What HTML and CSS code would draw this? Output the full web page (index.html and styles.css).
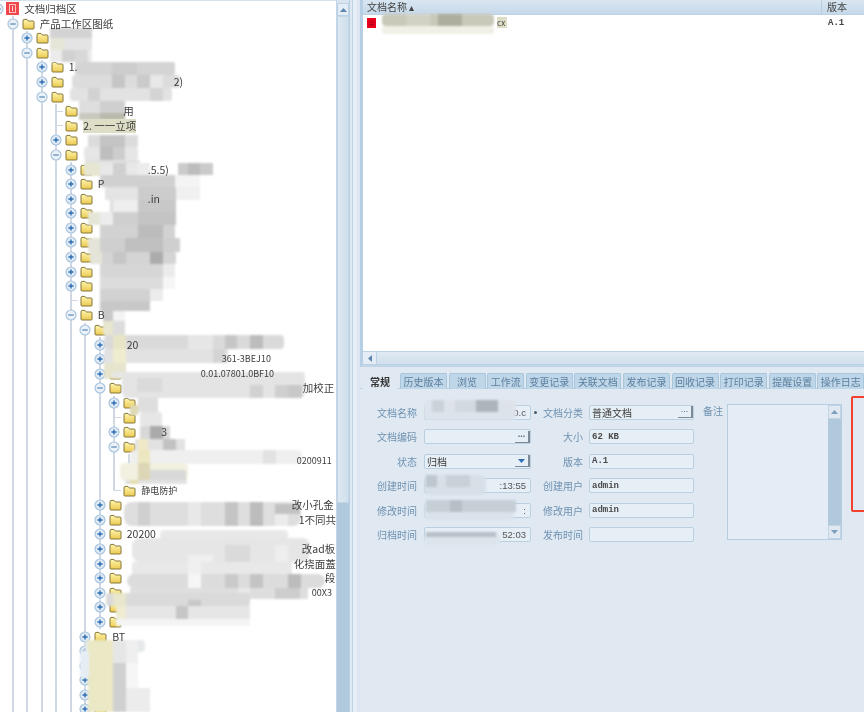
FILE: index.html
```html
<!DOCTYPE html>
<html lang="zh-CN">
<head>
<meta charset="utf-8">
<title>文档归档区</title>
<link rel="stylesheet" href="styles.css">
</head>
<body>
<svg class="defs" aria-hidden="true">
  <defs>
    <linearGradient id="fg" x1="0" y1="0" x2="0" y2="1"><stop offset="0" stop-color="#fff6b0"/><stop offset="1" stop-color="#ecc94e"/></linearGradient>
    <symbol id="folder" viewBox="0 0 13 12"><path d="M1 3.2 L1 10.2 Q1 11 2 11 L11.2 11 Q12 11 12 10.2 L12 4 Q12 3 11 3 L6.4 3 L5 1.4 L2 1.4 Q1 1.4 1 3.2 Z" fill="url(#fg)" stroke="#85773a" stroke-width="1"/></symbol>
    <symbol id="plus" viewBox="0 0 12 12"><circle cx="6" cy="6" r="5" fill="#dfeaf5" stroke="#a9c5de" stroke-width="1.2"/><path d="M3.4 6 H8.6 M6 3.4 V8.6" stroke="#2f6fb2" stroke-width="1.4"/></symbol>
    <symbol id="minus" viewBox="0 0 12 12"><circle cx="6" cy="6" r="5" fill="#eaf1f8" stroke="#a9c5de" stroke-width="1.2"/><path d="M3.2 6 H8.8" stroke="#6d97bd" stroke-width="1.4"/></symbol>
  </defs>
</svg>
<div class="app">
  <section class="left">
    <div class="tree">
      <div class="row"><i class="ex"><svg class="ico"><use href="#minus"/></svg></i><svg class="root-ico" viewBox="0 0 13 13"><rect width="13" height="13" fill="#f0484c"/><rect x="3.5" y="2.5" width="6" height="8" fill="none" stroke="#ffc0c0"/><path d="M6.5 4 V9" stroke="#ffd8d8"/></svg><span class="t">文档归档区</span></div>
      <div class="row"><i class="b"></i><i class="ex"><svg class="ico"><use href="#minus"/></svg></i><svg class="fo"><use href="#folder"/></svg><span class="t">产品工作区图纸</span></div>
      <div class="row"><i class="b"></i><i class="g"></i><i class="ex"><svg class="ico"><use href="#plus"/></svg></i><svg class="fo"><use href="#folder"/></svg></div>
      <div class="row"><i class="b"></i><i class="g"></i><i class="ex"><svg class="ico"><use href="#minus"/></svg></i><svg class="fo"><use href="#folder"/></svg></div>
      <div class="row"><i class="b"></i><i class="g"></i><i class="g"></i><i class="ex"><svg class="ico"><use href="#plus"/></svg></i><svg class="fo"><use href="#folder"/></svg><span class="t">1.</span></div>
      <div class="row"><i class="b"></i><i class="g"></i><i class="g"></i><i class="ex"><svg class="ico"><use href="#plus"/></svg></i><svg class="fo"><use href="#folder"/></svg><span class="t s110">2)</span></div>
      <div class="row"><i class="b"></i><i class="g"></i><i class="g"></i><i class="ex"><svg class="ico"><use href="#minus"/></svg></i><svg class="fo"><use href="#folder"/></svg></div>
      <div class="row"><i class="b"></i><i class="g"></i><i class="g"></i><i class="g"></i><i class="el"></i><svg class="fo"><use href="#folder"/></svg><span class="t s45">用</span></div>
      <div class="row"><i class="b"></i><i class="g"></i><i class="g"></i><i class="g"></i><i class="el"></i><svg class="fo"><use href="#folder"/></svg><span class="t hi">2. 一一立项</span></div>
      <div class="row"><i class="b"></i><i class="g"></i><i class="g"></i><i class="g"></i><i class="ex"><svg class="ico"><use href="#plus"/></svg></i><svg class="fo"><use href="#folder"/></svg></div>
      <div class="row"><i class="b"></i><i class="g"></i><i class="g"></i><i class="g"></i><i class="ex"><svg class="ico"><use href="#minus"/></svg></i><svg class="fo"><use href="#folder"/></svg></div>
      <div class="row"><i class="b"></i><i class="g"></i><i class="g"></i><i class="g"></i><i class="g"></i><i class="ex"><svg class="ico"><use href="#plus"/></svg></i><svg class="fo"><use href="#folder"/></svg><span class="t s55">.5.5)</span></div>
      <div class="row"><i class="b"></i><i class="g"></i><i class="g"></i><i class="g"></i><i class="g"></i><i class="ex"><svg class="ico"><use href="#plus"/></svg></i><svg class="fo"><use href="#folder"/></svg><span class="t">P</span></div>
      <div class="row"><i class="b"></i><i class="g"></i><i class="g"></i><i class="g"></i><i class="g"></i><i class="ex"><svg class="ico"><use href="#plus"/></svg></i><svg class="fo"><use href="#folder"/></svg><span class="t s55">.in</span></div>
      <div class="row"><i class="b"></i><i class="g"></i><i class="g"></i><i class="g"></i><i class="g"></i><i class="ex"><svg class="ico"><use href="#plus"/></svg></i><svg class="fo"><use href="#folder"/></svg></div>
      <div class="row"><i class="b"></i><i class="g"></i><i class="g"></i><i class="g"></i><i class="g"></i><i class="ex"><svg class="ico"><use href="#plus"/></svg></i><svg class="fo"><use href="#folder"/></svg></div>
      <div class="row"><i class="b"></i><i class="g"></i><i class="g"></i><i class="g"></i><i class="g"></i><i class="ex"><svg class="ico"><use href="#plus"/></svg></i><svg class="fo"><use href="#folder"/></svg></div>
      <div class="row"><i class="b"></i><i class="g"></i><i class="g"></i><i class="g"></i><i class="g"></i><i class="ex"><svg class="ico"><use href="#plus"/></svg></i><svg class="fo"><use href="#folder"/></svg></div>
      <div class="row"><i class="b"></i><i class="g"></i><i class="g"></i><i class="g"></i><i class="g"></i><i class="ex"><svg class="ico"><use href="#plus"/></svg></i><svg class="fo"><use href="#folder"/></svg></div>
      <div class="row"><i class="b"></i><i class="g"></i><i class="g"></i><i class="g"></i><i class="g"></i><i class="ex"><svg class="ico"><use href="#plus"/></svg></i><svg class="fo"><use href="#folder"/></svg></div>
      <div class="row"><i class="b"></i><i class="g"></i><i class="g"></i><i class="g"></i><i class="g"></i><i class="el"></i><svg class="fo"><use href="#folder"/></svg></div>
      <div class="row"><i class="b"></i><i class="g"></i><i class="g"></i><i class="g"></i><i class="g"></i><i class="ex"><svg class="ico"><use href="#minus"/></svg></i><svg class="fo"><use href="#folder"/></svg><span class="t">B</span></div>
      <div class="row"><i class="b"></i><i class="g"></i><i class="g"></i><i class="g"></i><i class="g"></i><i class="g"></i><i class="ex"><svg class="ico"><use href="#minus"/></svg></i><svg class="fo"><use href="#folder"/></svg></div>
      <div class="row"><i class="b"></i><i class="g"></i><i class="g"></i><i class="g"></i><i class="g"></i><i class="g"></i><i class="g"></i><i class="ex"><svg class="ico"><use href="#plus"/></svg></i><svg class="fo"><use href="#folder"/></svg><span class="t">20</span></div>
      <div class="row"><i class="b"></i><i class="g"></i><i class="g"></i><i class="g"></i><i class="g"></i><i class="g"></i><i class="g"></i><i class="ex"><svg class="ico"><use href="#plus"/></svg></i><svg class="fo"><use href="#folder"/></svg><span class="t s100 sm">361-3BEJ10</span></div>
      <div class="row"><i class="b"></i><i class="g"></i><i class="g"></i><i class="g"></i><i class="g"></i><i class="g"></i><i class="g"></i><i class="ex"><svg class="ico"><use href="#plus"/></svg></i><svg class="fo"><use href="#folder"/></svg><span class="t s79 sm">0.01.07801.0BF10</span></div>
      <div class="row"><i class="b"></i><i class="g"></i><i class="g"></i><i class="g"></i><i class="g"></i><i class="g"></i><i class="g"></i><i class="ex"><svg class="ico"><use href="#minus"/></svg></i><svg class="fo"><use href="#folder"/></svg><span class="t s181">加校正</span></div>
      <div class="row"><i class="b"></i><i class="g"></i><i class="g"></i><i class="g"></i><i class="g"></i><i class="g"></i><i class="g"></i><i class="g"></i><i class="ex"><svg class="ico"><use href="#plus"/></svg></i><svg class="fo"><use href="#folder"/></svg></div>
      <div class="row"><i class="b"></i><i class="g"></i><i class="g"></i><i class="g"></i><i class="g"></i><i class="g"></i><i class="g"></i><i class="g"></i><i class="el"></i><svg class="fo"><use href="#folder"/></svg></div>
      <div class="row"><i class="b"></i><i class="g"></i><i class="g"></i><i class="g"></i><i class="g"></i><i class="g"></i><i class="g"></i><i class="g"></i><i class="ex"><svg class="ico"><use href="#plus"/></svg></i><svg class="fo"><use href="#folder"/></svg><span class="t s25">3</span></div>
      <div class="row"><i class="b"></i><i class="g"></i><i class="g"></i><i class="g"></i><i class="g"></i><i class="g"></i><i class="g"></i><i class="g"></i><i class="ex"><svg class="ico"><use href="#minus"/></svg></i><svg class="fo"><use href="#folder"/></svg></div>
      <div class="row"><i class="b"></i><i class="g"></i><i class="g"></i><i class="g"></i><i class="g"></i><i class="g"></i><i class="g"></i><i class="g"></i><i class="g"></i><i class="el"></i><svg class="fo"><use href="#folder"/></svg><span class="t s148 sm">0200911</span></div>
      <div class="row"><i class="b"></i><i class="g"></i><i class="g"></i><i class="g"></i><i class="g"></i><i class="g"></i><i class="g"></i><i class="g"></i><i class="g"></i><i class="el"></i><svg class="fo"><use href="#folder"/></svg></div>
      <div class="row"><i class="b"></i><i class="g"></i><i class="g"></i><i class="g"></i><i class="g"></i><i class="g"></i><i class="g"></i><i class="g"></i><i class="el end"></i><svg class="fo"><use href="#folder"/></svg><span class="t sm">静电防护</span></div>
      <div class="row"><i class="b"></i><i class="g"></i><i class="g"></i><i class="g"></i><i class="g"></i><i class="g"></i><i class="g"></i><i class="ex"><svg class="ico"><use href="#plus"/></svg></i><svg class="fo"><use href="#folder"/></svg><span class="t s170">改小孔金</span></div>
      <div class="row"><i class="b"></i><i class="g"></i><i class="g"></i><i class="g"></i><i class="g"></i><i class="g"></i><i class="g"></i><i class="ex"><svg class="ico"><use href="#plus"/></svg></i><svg class="fo"><use href="#folder"/></svg><span class="t s177">1不同共</span></div>
      <div class="row"><i class="b"></i><i class="g"></i><i class="g"></i><i class="g"></i><i class="g"></i><i class="g"></i><i class="g"></i><i class="ex"><svg class="ico"><use href="#plus"/></svg></i><svg class="fo"><use href="#folder"/></svg><span class="t">20200</span></div>
      <div class="row"><i class="b"></i><i class="g"></i><i class="g"></i><i class="g"></i><i class="g"></i><i class="g"></i><i class="g"></i><i class="ex"><svg class="ico"><use href="#plus"/></svg></i><svg class="fo"><use href="#folder"/></svg><span class="t s180">改ad板</span></div>
      <div class="row"><i class="b"></i><i class="g"></i><i class="g"></i><i class="g"></i><i class="g"></i><i class="g"></i><i class="g"></i><i class="ex"><svg class="ico"><use href="#plus"/></svg></i><svg class="fo"><use href="#folder"/></svg><span class="t s172">化挠面蓋</span></div>
      <div class="row"><i class="b"></i><i class="g"></i><i class="g"></i><i class="g"></i><i class="g"></i><i class="g"></i><i class="g"></i><i class="ex"><svg class="ico"><use href="#plus"/></svg></i><svg class="fo"><use href="#folder"/></svg><span class="t s203">段</span></div>
      <div class="row"><i class="b"></i><i class="g"></i><i class="g"></i><i class="g"></i><i class="g"></i><i class="g"></i><i class="g"></i><i class="ex"><svg class="ico"><use href="#plus"/></svg></i><svg class="fo"><use href="#folder"/></svg><span class="t s186 sm">00X3</span></div>
      <div class="row"><i class="b"></i><i class="g"></i><i class="g"></i><i class="g"></i><i class="g"></i><i class="g"></i><i class="g"></i><i class="ex"><svg class="ico"><use href="#plus"/></svg></i><svg class="fo"><use href="#folder"/></svg></div>
      <div class="row"><i class="b"></i><i class="g"></i><i class="g"></i><i class="g"></i><i class="g"></i><i class="g"></i><i class="g"></i><i class="ex"><svg class="ico"><use href="#plus"/></svg></i><svg class="fo"><use href="#folder"/></svg></div>
      <div class="row"><i class="b"></i><i class="g"></i><i class="g"></i><i class="g"></i><i class="g"></i><i class="g"></i><i class="ex"><svg class="ico"><use href="#plus"/></svg></i><svg class="fo"><use href="#folder"/></svg><span class="t">BT</span></div>
      <div class="row"><i class="b"></i><i class="g"></i><i class="g"></i><i class="g"></i><i class="g"></i><i class="g"></i><i class="ex"><svg class="ico"><use href="#plus"/></svg></i><svg class="fo"><use href="#folder"/></svg></div>
      <div class="row"><i class="b"></i><i class="g"></i><i class="g"></i><i class="g"></i><i class="g"></i><i class="g"></i><i class="ex"><svg class="ico"><use href="#plus"/></svg></i><svg class="fo"><use href="#folder"/></svg></div>
      <div class="row"><i class="b"></i><i class="g"></i><i class="g"></i><i class="g"></i><i class="g"></i><i class="g"></i><i class="ex"><svg class="ico"><use href="#plus"/></svg></i><svg class="fo"><use href="#folder"/></svg></div>
      <div class="row"><i class="b"></i><i class="g"></i><i class="g"></i><i class="g"></i><i class="g"></i><i class="g"></i><i class="ex"><svg class="ico"><use href="#plus"/></svg></i><svg class="fo"><use href="#folder"/></svg></div>
      <div class="row"><i class="b"></i><i class="g"></i><i class="g"></i><i class="g"></i><i class="g"></i><i class="g"></i><i class="ex"><svg class="ico"><use href="#plus"/></svg></i><svg class="fo"><use href="#folder"/></svg></div>
    </div>
    <div class="vscroll">
      <div class="sbtn"><svg class="arrow" viewBox="0 0 7 4"><path d="M3.5 0 L7 4 H0 Z" fill="#5f87ad"/></svg></div>
      <div class="sthumb"></div>
      <div class="strack"></div>
    </div>
  </section>
  <div class="splitter"></div>
  <section class="right">
    <div class="listpane">
      <div class="lhead"><span class="lname">文档名称 ▴</span><span class="lver">版本</span></div>
      <div class="lrow">
        <svg class="fileico" viewBox="0 0 9 10"><rect width="9" height="10" fill="#e8001c"/><path d="M2 4 H7 M2 6.5 H7" stroke="#a80016"/></svg>
        <span class="lfile hi">cx</span>
        <span class="lrev">A.1</span>
      </div>
      <div class="lfill"></div>
      <div class="hscroll">
        <div class="hbtn"><svg class="arrowh" viewBox="0 0 4 7"><path d="M0 3.5 L4 0 V7 Z" fill="#5f87ad"/></svg></div>
        <div class="hthumb"></div>
      </div>
    </div>
    <div class="tabs">
      <span class="tab on">常规</span>
      <span class="tab w47">历史版本</span>
      <span class="tab w37">浏览</span>
      <span class="tab w37">工作流</span>
      <span class="tab w47">变更记录</span>
      <span class="tab w47">关联文档</span>
      <span class="tab w47">发布记录</span>
      <span class="tab w47">回收记录</span>
      <span class="tab w47">打印记录</span>
      <span class="tab w47">提醒设置</span>
      <span class="tab w47">操作日志</span>
    </div>
    <div class="form">
      <label class="lb">文档名称</label>
      <div class="fd tail">0.c</div>
      <label class="lb r req">文档分类</label>
      <div class="fd r sel cjk">普通文档<span class="pick">...</span></div>
      <label class="lb note">备注</label>
      <div class="memo">
        <div class="memobar">
          <div class="mbtn"><svg class="arrow" viewBox="0 0 7 4"><path d="M3.5 0 L7 4 H0 Z" fill="#7c9dbd"/></svg></div>
          <div class="mtrack"></div>
          <div class="mbtn"><svg class="arrow" viewBox="0 0 7 4"><path d="M0 0 H7 L3.5 4 Z" fill="#7c9dbd"/></svg></div>
        </div>
      </div>
      <label class="lb">文档编码</label>
      <div class="fd sel"><span class="pick">...</span></div>
      <label class="lb r">大小</label>
      <div class="fd r">62 KB</div>
      <label class="lb">状态</label>
      <div class="fd sel cjk">归档<span class="pick drop"><svg class="arrowd" viewBox="0 0 7 4"><path d="M0 0 H7 L3.5 4 Z" fill="#2f6fb2"/></svg></span></div>
      <label class="lb r">版本</label>
      <div class="fd r">A.1</div>
      <label class="lb">创建时间</label>
      <div class="fd tail">:13:55</div>
      <label class="lb r">创建用户</label>
      <div class="fd r">admin</div>
      <label class="lb">修改时间</label>
      <div class="fd tail">:</div>
      <label class="lb r">修改用户</label>
      <div class="fd r">admin</div>
      <label class="lb">归档时间</label>
      <div class="fd tail">52:03</div>
      <label class="lb r">发布时间</label>
      <div class="fd r"></div>
    </div>
  </section>
  <svg class="mosaic" viewBox="0 0 864 712" aria-hidden="true">
    <g>
      <path d="M50 28H92V62H50Z" fill="#ececec"/>
      <rect x="50" y="28" width="42" height="10" fill="#d3d3d3"/>
      <rect x="50" y="38" width="14" height="12" fill="#e6e6d8"/><rect x="64" y="38" width="28" height="12" fill="#e4e4e4"/>
      <rect x="62" y="50" width="13" height="12" fill="#d2d2d2"/><rect x="75" y="50" width="13" height="12" fill="#d8d8d8"/>
      <rect x="75" y="62" width="100" height="13" fill="#d4d4d4" rx="2"/><rect x="112" y="62" width="25" height="13" fill="#cdcdcd"/>
      <rect x="72" y="75" width="108" height="13" fill="#dcdcdc" rx="3"/><rect x="112" y="75" width="13" height="13" fill="#c6c6c6"/><rect x="137" y="75" width="13" height="13" fill="#cacaca"/><rect x="150" y="75" width="13" height="13" fill="#e8e8e8"/>
      <rect x="70" y="88" width="102" height="13" fill="#e2e2e2" rx="3"/><rect x="88" y="88" width="12" height="13" fill="#d2d2d2"/><rect x="150" y="88" width="13" height="13" fill="#d4d4d4"/>
      <rect x="79" y="101" width="46" height="12" fill="#dedede"/><rect x="100" y="101" width="25" height="12" fill="#cfcfcf"/>
      <rect x="79" y="113" width="46" height="7" fill="#c8c8be"/><rect x="100" y="113" width="25" height="7" fill="#b9b9ac"/>
      <rect x="88" y="135" width="50" height="12" fill="#dcdcdc"/><rect x="100" y="135" width="25" height="12" fill="#c4c4c4"/>
      <rect x="84" y="147" width="54" height="13" fill="#e6e6e6" rx="3"/><rect x="100" y="147" width="13" height="13" fill="#bebebe"/><rect x="113" y="147" width="12" height="13" fill="#cdcdcd"/>
      <rect x="85" y="160" width="55" height="3" fill="#e0e0e0"/>
      <rect x="84" y="163" width="54" height="13" fill="#e8e8e8" rx="3"/><rect x="113" y="163" width="13" height="13" fill="#d0d0d0"/>
      <rect x="84" y="163" width="16" height="13" fill="#e6e6d2"/>
      <rect x="138" y="163" width="12" height="12" fill="#ececec"/>
      <rect x="178" y="163" width="35" height="12" fill="#cbcbcb"/><rect x="188" y="163" width="12" height="12" fill="#bdbdbd"/>
      <rect x="100" y="175" width="88" height="12" fill="#d0d0d0" rx="2"/><rect x="175" y="175" width="25" height="12" fill="#f4f4f4"/>
      <rect x="105" y="187" width="85" height="13" fill="#e4e4e4"/><rect x="138" y="187" width="38" height="13" fill="#cccccc"/><rect x="176" y="187" width="24" height="13" fill="#f0f0f0"/>
      <rect x="110" y="200" width="66" height="12" fill="#dedede"/><rect x="113" y="200" width="25" height="12" fill="#eeeeee"/><rect x="138" y="200" width="38" height="12" fill="#c8c8c8"/>
      <rect x="88" y="212" width="88" height="13" fill="#ececec" rx="4"/><rect x="113" y="212" width="25" height="13" fill="#cfcfcf"/><rect x="138" y="212" width="38" height="13" fill="#c4c4c4"/>
      <rect x="88" y="212" width="12" height="13" fill="#e6e6d8"/>
      <rect x="100" y="225" width="75" height="13" fill="#d2d2d2"/><rect x="138" y="225" width="25" height="13" fill="#bcbcbc"/>
      <rect x="100" y="238" width="80" height="14" fill="#cfcfcf"/><rect x="88" y="238" width="12" height="14" fill="#e4e4d8"/><rect x="125" y="238" width="38" height="14" fill="#c0c0c0"/>
      <rect x="90" y="252" width="86" height="12" fill="#d4d4d4" rx="2"/><rect x="90" y="252" width="12" height="12" fill="#e4e4d8"/><rect x="150" y="252" width="13" height="12" fill="#acacac"/><rect x="113" y="252" width="13" height="12" fill="#c6c6c6"/>
      <rect x="100" y="264" width="75" height="13" fill="#d6d6d6"/><rect x="163" y="264" width="12" height="13" fill="#ebebeb"/>
      <rect x="100" y="277" width="75" height="12" fill="#dcdcdc"/><rect x="163" y="277" width="12" height="12" fill="#f6f6f6"/>
      <rect x="100" y="289" width="63" height="12" fill="#d2d2d2"/><rect x="150" y="289" width="13" height="12" fill="#ececec"/>
      <rect x="100" y="301" width="50" height="10" fill="#c8c8c8"/>
      <rect x="103" y="311" width="22" height="10" fill="#c8c8c8"/><rect x="113" y="311" width="12" height="10" fill="#f4f4f4"/>
      <rect x="103" y="321" width="22" height="14" fill="#dcdcdc"/><rect x="103" y="321" width="10" height="14" fill="#e8e6cf"/>
      <rect x="104" y="335" width="180" height="14" fill="#dadada" rx="4"/><rect x="113" y="335" width="13" height="14" fill="#e8e4c6"/><rect x="225" y="335" width="12" height="14" fill="#c6c6c6"/><rect x="250" y="335" width="13" height="14" fill="#bdbdbd"/><rect x="188" y="335" width="25" height="14" fill="#e6e6e6"/>
      <rect x="104" y="349" width="124" height="14" fill="#e2e2e2"/><rect x="113" y="349" width="13" height="14" fill="#f0eccf"/><rect x="213" y="349" width="12" height="14" fill="#d4d4d4"/>
      <rect x="104" y="363" width="22" height="16" fill="#e6e4cc"/>
      <rect x="112" y="372" width="193" height="6" fill="#e6e6e6" rx="3"/>
      <rect x="122" y="372" width="183" height="26" fill="#e4e4e4" rx="6"/><rect x="250" y="385" width="13" height="13" fill="#d2d2d2"/><rect x="275" y="385" width="13" height="13" fill="#cfcfcf"/><rect x="288" y="385" width="14" height="13" fill="#c8c8c8"/><rect x="137" y="378" width="25" height="14" fill="#dadada"/>
      <rect x="138" y="398" width="20" height="14" fill="#dedede"/><rect x="130" y="405" width="8" height="10" fill="#dfd9b4"/>
      <rect x="140" y="412" width="22" height="14" fill="#e6e6e6" rx="3"/>
      <rect x="140" y="426" width="30" height="13" fill="#d8d8d8"/><rect x="150" y="426" width="13" height="13" fill="#aaaaaa"/>
      <rect x="135" y="439" width="50" height="13" fill="#e2e2e2"/><rect x="163" y="439" width="13" height="13" fill="#c2c2c2"/><rect x="138" y="439" width="10" height="13" fill="#efe9c8"/>
      <rect x="130" y="450" width="172" height="14" fill="#efefef" rx="5"/><rect x="138" y="450" width="12" height="14" fill="#ece6c0"/><rect x="263" y="450" width="13" height="14" fill="#e2e2e2"/>
      <rect x="120" y="463" width="68" height="18" fill="#f2f0e0" rx="5"/><rect x="138" y="463" width="12" height="18" fill="#ddd6b6"/><rect x="150" y="470" width="36" height="11" fill="#d8d8d8"/>
      <rect x="125" y="480" width="62" height="4" fill="#e2e2e2"/><rect x="130" y="480" width="8" height="4" fill="#e3dcae"/>
      <rect x="124" y="502" width="177" height="24" fill="#dedede" rx="8"/><rect x="138" y="502" width="12" height="24" fill="#cfcfcf"/><rect x="188" y="502" width="13" height="24" fill="#e8e8e8"/><rect x="225" y="502" width="13" height="24" fill="#c4c4c4"/><rect x="250" y="502" width="13" height="24" fill="#bcbcbc"/><rect x="275" y="504" width="25" height="10" fill="#c2c2c2"/><rect x="275" y="514" width="13" height="12" fill="#ececec"/>
      <rect x="160" y="530" width="128" height="10" fill="#e8e8e8" rx="4"/>
      <rect x="132" y="538" width="178" height="24" fill="#e6e6e6" rx="8"/><rect x="225" y="545" width="25" height="17" fill="#dadada"/><rect x="188" y="555" width="25" height="7" fill="#efefef"/><rect x="275" y="545" width="13" height="17" fill="#eeeeee"/>
      <rect x="132" y="562" width="160" height="12" fill="#e8e8e8"/><rect x="188" y="562" width="13" height="12" fill="#f0f0f0"/>
      <rect x="127" y="574" width="198" height="14" fill="#dcdcdc" rx="7"/><rect x="188" y="574" width="13" height="14" fill="#f6f6f6"/><rect x="250" y="574" width="13" height="14" fill="#c4c4c4"/><rect x="288" y="574" width="13" height="14" fill="#bcbcbc"/><rect x="225" y="574" width="13" height="14" fill="#cacaca"/>
      <rect x="130" y="588" width="178" height="11" fill="#dedede"/><rect x="238" y="588" width="12" height="11" fill="#e8e8e8"/><rect x="275" y="588" width="25" height="11" fill="#cdcdcd"/>
      <rect x="106" y="593" width="144" height="13" fill="#dadada" rx="3"/><rect x="113" y="593" width="13" height="13" fill="#e8e6cc"/><rect x="188" y="600" width="13" height="6" fill="#c8c8c8"/>
      <rect x="116" y="606" width="134" height="13" fill="#e6e6e6"/><rect x="176" y="606" width="12" height="13" fill="#c6c6c6"/><rect x="116" y="606" width="10" height="13" fill="#efecd2"/>
      <rect x="116" y="619" width="134" height="7" fill="#f4f4f4"/>
      <rect x="85" y="640" width="60" height="12" fill="#e6eaea" rx="4"/><rect x="88" y="640" width="25" height="72" fill="#ebe8c6"/><rect x="113" y="640" width="13" height="23" fill="#e6e6e6"/><rect x="126" y="640" width="12" height="23" fill="#efefef"/>
      <rect x="113" y="663" width="13" height="50" fill="#d0d0d0"/><rect x="126" y="663" width="12" height="30" fill="#f6f6f6"/><rect x="126" y="688" width="24" height="24" fill="#ececec"/>
      <rect x="80" y="650" width="9" height="28" fill="#e6eef4" rx="4"/>
    </g>
    <g>
      <rect x="382" y="14" width="112" height="12" fill="#c9c9ba" rx="4"/><rect x="438" y="14" width="24" height="12" fill="#aeae9e"/><rect x="406" y="14" width="24" height="12" fill="#d2d2c4"/><rect x="382" y="26" width="112" height="8" fill="#f0f0e6" rx="3"/>
      <rect x="424" y="400" width="92" height="20" fill="#dde3ea" rx="4"/><rect x="476" y="400" width="22" height="12" fill="#adb4bc"/><rect x="432" y="400" width="12" height="12" fill="#ccd2d9"/><rect x="455" y="400" width="21" height="12" fill="#d3d9e0"/>
      <rect x="424" y="475" width="62" height="20" fill="#d7dfe7" rx="6"/><rect x="426" y="475" width="11" height="12" fill="#bec6ce"/><rect x="446" y="475" width="24" height="12" fill="#c8d0d8"/>
      <rect x="424" y="500" width="90" height="20" fill="#dae2ea" rx="5"/><rect x="426" y="500" width="90" height="12" fill="#c6ced6"/><rect x="450" y="500" width="12" height="12" fill="#b6bec6"/>
      <rect x="424" y="532" width="76" height="14" fill="#dde5ec" rx="5"/><rect x="426" y="532" width="70" height="5" fill="#b8c0c8"/>
    </g>
  </svg>
  <div class="marker"></div>
</div>
</body>
</html>
```
FILE: styles.css
```css
* { box-sizing: border-box; }
html, body { margin: 0; padding: 0; }
body { width: 864px; height: 712px; overflow: hidden; background: #e0e9f2; font-family: "Noto Sans CJK SC", "Liberation Sans", sans-serif; font-size: 10px; color: #444; }
.defs { position: absolute; width: 0; height: 0; }
.app { position: relative; display: flex; width: 864px; height: 712px; overflow: hidden; background: #e0e9f2; filter: blur(0.55px); }

.left { display: flex; width: 350px; height: 712px; flex: none; }
.tree { width: 336px; height: 712px; flex: none; overflow: hidden; background: #fff; padding-top: 0.7px; border-top: 1px solid #d5e2ee; }
.row { display: flex; align-items: center; height: 14.6px; margin-left: -9.25px; white-space: nowrap; }
.row i { display: block; flex: none; width: 14.5px; height: 14.6px; }
.g, .ex { background: linear-gradient(#cfd7e2, #cfd7e2) center / 2px 100% no-repeat; }
.el { background:
  linear-gradient(#cfd7e2, #cfd7e2) center / 2px 100% no-repeat,
  linear-gradient(#cfd7e2, #cfd7e2) right center / 50% 1px no-repeat; }
.el.end { background:
  linear-gradient(#cfd7e2, #cfd7e2) center top / 2px 50% no-repeat,
  linear-gradient(#cfd7e2, #cfd7e2) right center / 50% 1px no-repeat; }
.row i.ex { display: flex; align-items: center; justify-content: center; }
.ico { width: 12px; height: 12px; display: block; }
.fo { flex: none; width: 13px; height: 12px; margin-left: 2px; display: block; }
.root-ico { flex: none; width: 13px; height: 13px; margin-left: 1px; display: block; }
.t { position: relative; z-index: 1; margin-left: 5px; font-size: 10.5px; line-height: 14px; color: #3c3c3c; flex: none; }
.sm { font-size: 9px; }
.hi { background: #dedec6; }
.s25 { margin-left: 25px; }
.s45 { margin-left: 45px; }
.s55 { margin-left: 55px; }
.s79 { margin-left: 79px; }
.s100 { margin-left: 100px; }
.s110 { margin-left: 110px; }
.s148 { margin-left: 146px; }
.s170 { margin-left: 170px; }
.s172 { margin-left: 172px; }
.s177 { margin-left: 177px; }
.s180 { margin-left: 180px; }
.s181 { margin-left: 181px; }
.s186 { margin-left: 190px; }
.s203 { margin-left: 203px; }

.vscroll { display: flex; flex-direction: column; width: 14px; height: 712px; flex: none; background: #d8e5f0; border-left: 1px solid #c4d6e6; border-right: 1px solid #b8cfe2; padding-top: 3px; }
.sbtn { display: flex; align-items: center; justify-content: center; height: 13px; flex: none; background: #e4edf6; border: 1px solid #bcd2e4; }
.arrow { width: 7px; height: 4px; display: block; }
.sthumb { height: 487px; flex: none; background: linear-gradient(90deg, #dce8f2, #cfdfec); border: 1px solid #c2d6e6; }
.strack { flex: 1; background: #b0c9dd; }

.splitter { width: 10px; height: 712px; flex: none; background: linear-gradient(90deg, #dfe9f3 0 2px, #c0d4e4 2px 3px, #e6eef6 3px 7px, #dbe6f0 7px); }

.right { display: flex; flex-direction: column; width: 504px; height: 712px; flex: none; }
.listpane { display: flex; flex-direction: column; height: 367px; flex: none; background: #fff; border-left: 3px solid #b7cfe2; border-bottom: 2px solid #c0d5e6; }
.lhead { display: flex; justify-content: space-between; height: 15px; flex: none; background: linear-gradient(#d9e6f1, #c6d9e9); border-bottom: 1px solid #bcd3e6; font-size: 10px; line-height: 14px; color: #444; }
.lname { padding-left: 4px; }
.lver { width: 43px; padding-left: 5px; border-left: 1px solid #b8cfe2; }
.lrow { display: flex; align-items: center; height: 15px; flex: none; font-size: 8px; color: #444; }
.fileico { width: 9px; height: 10px; margin-left: 4px; flex: none; }
.lfile { margin-left: 121px; width: 10px; line-height: 11px; }
.lrev { margin-left: auto; width: 36px; font-family: "Liberation Mono", monospace; font-size: 9px; font-weight: 700; }
.lfill { flex: 1; }
.hscroll { display: flex; height: 14px; flex: none; background: #d6e4f0; border-top: 1px solid #bcd2e4; border-bottom: 1px solid #bcd2e4; }
.hbtn { display: flex; align-items: center; justify-content: center; width: 14px; flex: none; background: #e4edf6; border-right: 1px solid #bcd2e4; }
.arrowh { width: 4px; height: 7px; display: block; }
.hthumb { flex: 1; background: linear-gradient(#e0eaf3, #d0e0ec); }

.tabs { display: flex; align-items: flex-end; height: 22px; flex: none; padding-left: 2px; background: linear-gradient(#e0e9f2 0 21px, #b8cfe2 21px); }
.tab { display: flex; align-items: center; justify-content: center; height: 16px; margin-right: 1.6px; flex: none; background: #bfd6e8; border: 1px solid #a8c6dc; border-bottom: 0; border-radius: 2px 2px 0 0; font-size: 10px; color: #5c7f9e; }
.tab.on { width: 36px; margin-right: 2px; background: #e0e9f2; border-color: #e0e9f2; color: #333; font-weight: 700; height: 17px; }
.w47 { width: 47px; }
.w37 { width: 37px; }

.form { display: grid; grid-template-columns: 64px 107px 58px 105px 33px 115px; grid-auto-rows: 24.5px; margin-top: 11px; align-items: center; }
.lb { grid-column: 1; text-align: right; padding-right: 7px; font-size: 10px; color: #6f92b2; line-height: 15px; white-space: nowrap; }
.lb.r { grid-column: 3; padding-right: 6px; }
.req { position: relative; }
.req::before { content: ""; position: absolute; left: 3px; top: 6px; width: 3px; height: 3px; border-radius: 50%; background: #4a5a6a; }
.lb.note { grid-column: 5; grid-row: 1; align-self: start; margin-top: 3px; padding: 0 0 0 9px; text-align: left; }
.fd { grid-column: 2; display: flex; align-items: center; height: 15px; padding: 0 2px; background: #e6eef6; border: 1px solid #b9d0e3; border-radius: 2px; font-family: "Liberation Mono", monospace; font-size: 9px; font-weight: 700; color: #4a4a4a; white-space: nowrap; }
.fd.r { grid-column: 4; }
.cjk { font-family: "Noto Sans CJK SC", sans-serif; font-size: 10px; font-weight: 400; color: #3a3a3a; }
.sel { justify-content: space-between; }
.tail { justify-content: flex-end; font-family: "Liberation Sans", sans-serif; font-weight: 400; color: #555; padding-right: 4px; font-size: 9.5px; }
.pick { display: flex; align-items: flex-start; justify-content: center; width: 15px; height: 12px; margin-left: auto; margin-right: -2px; border-right: 2px solid #7d8a96; border-bottom: 1px solid #7d8a96; font-family: "Liberation Sans", sans-serif; font-size: 9px; line-height: 7px; color: #5c6b7a; }
.drop { align-items: center; }
.arrowd { width: 7px; height: 4px; display: block; }
.memo { grid-column: 6; grid-row: 1 / span 6; align-self: start; display: flex; justify-content: flex-end; height: 136px; margin-top: 4px; background: #e4edf5; border: 1px solid #b4cde0; }
.memobar { display: flex; flex-direction: column; width: 13px; background: #b0c8dc; }
.mbtn { display: flex; align-items: center; justify-content: center; height: 14px; flex: none; background: #e0e9f2; border: 1px solid #c0d4e4; }
.mtrack { flex: 1; background: #b1c9dc; }

.mosaic { position: absolute; left: 0; top: 0; width: 864px; height: 712px; pointer-events: none; filter: blur(1px); }
.marker { position: absolute; left: 851px; top: 396px; width: 20px; height: 116px; border: 2px solid #f2412f; border-radius: 2px; pointer-events: none; }
```
